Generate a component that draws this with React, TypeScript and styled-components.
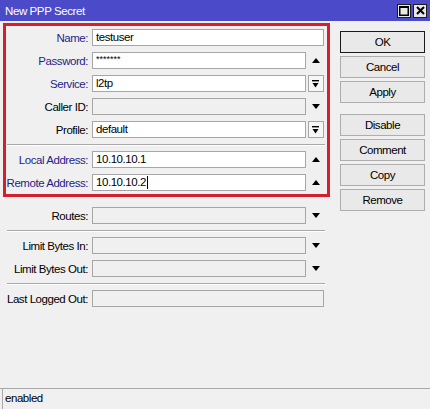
import React from "react";
import styled, { createGlobalStyle } from "styled-components";

const Global = createGlobalStyle`
  html, body { margin: 0; padding: 0; background: #f0f0f0; }
  body {
    font-family: "Liberation Sans", Arial, sans-serif;
    font-size: 11px;
    letter-spacing: -0.45px;
    color: #000;
  }
`;

const Window = styled.div`
  width: 430px;
  height: 409px;
  background: #f0f0f0;
  display: flex;
  flex-direction: column;
  overflow: hidden;
`;

const TitleBar = styled.div`
  height: 21px;
  flex: none;
  background: #4b4bc9;
  color: #fff;
  display: flex;
  align-items: center;
  padding: 0 3px 0 5px;
  font-size: 11.5px;
  letter-spacing: -0.4px;
`;

const TitleButtons = styled.div`
  margin-left: auto;
  display: flex;
  gap: 2px;
`;

const TitleButton = styled.div`
  width: 14px;
  height: 14px;
  box-sizing: border-box;
  border: 1px solid #1c1c1c;
  background: #e8e8e8;
  display: flex;
  align-items: center;
  justify-content: center;
`;

const Body = styled.div`
  flex: 1;
  display: flex;
  gap: 10px;
  padding: 2px 0 0 3px;
`;

const LeftCol = styled.div`
  width: 327px;
  display: flex;
  flex-direction: column;
`;

const RedBox = styled.div`
  width: 327px;
  box-sizing: border-box;
  border: 3px solid #d3202c;
  padding: 3px 3px 3px 0;
  display: flex;
  flex-direction: column;
  gap: 6px;
`;

const Stack = styled.div`
  margin-top: 10px;
  display: flex;
  flex-direction: column;
  gap: 6px;
`;

const Separator = styled.div<{ $inset: number }>`
  height: 1px;
  background: #a9a9a9;
  box-shadow: 0 1px 0 #ffffff;
  margin-left: ${(p) => p.$inset}px;
  width: 318px;
`;

const Row = styled.div`
  display: flex;
  align-items: center;
  height: 17px;
`;

const Label = styled.div<{ $w: number; $blue?: boolean }>`
  width: ${(p) => p.$w}px;
  flex: none;
  box-sizing: border-box;
  padding-right: 4px;
  text-align: right;
  white-space: nowrap;
  font-size: 11.5px;
  color: ${(p) => (p.$blue ? "#1e1e8c" : "#000")};
`;

const Field = styled.div<{ $full?: boolean; $disabled?: boolean }>`
  width: ${(p) => (p.$full ? 232 : 214)}px;
  height: 17px;
  flex: none;
  box-sizing: border-box;
  border: 1px solid #a6a6a6;
  background: ${(p) => (p.$disabled ? "#f0f0f0" : "#ffffff")};
  padding: 0 3px;
  line-height: 15px;
  font-size: 11.5px;
  white-space: nowrap;
  overflow: hidden;
  display: flex;
  align-items: center;
`;

const Stars = styled.span`
  font-size: 9px;
  letter-spacing: 0;
  line-height: 15px;
  position: relative;
  top: -1px;
`;

const Caret = styled.span`
  display: inline-block;
  width: 1px;
  height: 13px;
  background: #000;
  margin-left: 1px;
`;

const Trailing = styled.div`
  width: 18px;
  height: 17px;
  flex: none;
  display: flex;
  align-items: center;
  justify-content: center;
  padding-left: 2px;
  box-sizing: border-box;
`;

const DropButton = styled.div`
  width: 16px;
  height: 17px;
  margin-left: -1px;
  box-sizing: border-box;
  border: 1px solid #a6a6a6;
  background: #f7f7f7;
  display: flex;
  align-items: center;
  justify-content: center;
`;

const RightCol = styled.div`
  margin-top: 8px;
  width: 85px;
  display: flex;
  flex-direction: column;
  gap: 3px;
`;

const Button = styled.div<{ $primary?: boolean; $space?: boolean }>`
  height: 22px;
  box-sizing: border-box;
  border: 1px solid ${(p) => (p.$primary ? "#1a1a1a" : "#adadad")};
  background: #e9e9e9;
  display: flex;
  align-items: center;
  justify-content: center;
  font-size: 11.5px;
  margin-top: ${(p) => (p.$space ? 8 : 0)}px;
`;

const StatusBar = styled.div`
  height: 21px;
  flex: none;
  border-top: 1px solid #a9a9a9;
  box-sizing: border-box;
  display: flex;
  padding: 0 4px 0 2px;
`;

const StatusField = styled.div`
  flex: 1;
  border-left: 1px solid #a9a9a9;
  padding: 0 0 2px 2px;
  display: flex;
  align-items: center;
  font-size: 11.5px;
`;

const UpArrow = () => (
  <svg width="8" height="5" viewBox="0 0 8 5">
    <polygon points="0,5 8,5 4,0" fill="#000" />
  </svg>
);

const DownArrow = () => (
  <svg width="8" height="5" viewBox="0 0 8 5">
    <polygon points="0,0 8,0 4,5" fill="#000" />
  </svg>
);

const DropIcon = () => (
  <svg width="7" height="8" viewBox="0 0 7 8">
    <rect x="0" y="0" width="7" height="1.4" fill="#000" />
    <polygon points="0.5,3 6.5,3 3.5,7.5" fill="#000" />
  </svg>
);

type Trail = "up" | "down" | "drop" | "none";

function FieldRow(props: {
  label: string;
  labelW: number;
  blue?: boolean;
  value?: React.ReactNode;
  disabled?: boolean;
  trail: Trail;
}) {
  const full = props.trail === "none";
  return (
    <Row>
      <Label $w={props.labelW} $blue={props.blue}>
        {props.label}
      </Label>
      <Field $full={full} $disabled={props.disabled}>
        {props.value}
      </Field>
      {props.trail === "up" && (
        <Trailing>
          <UpArrow />
        </Trailing>
      )}
      {props.trail === "down" && (
        <Trailing>
          <DownArrow />
        </Trailing>
      )}
      {props.trail === "drop" && (
        <Trailing>
          <DropButton>
            <DropIcon />
          </DropButton>
        </Trailing>
      )}
    </Row>
  );
}

export default function App() {
  const inW = 86;
  const outW = 89;
  return (
    <>
      <Global />
      <Window>
        <TitleBar>
          New PPP Secret
          <TitleButtons>
            <TitleButton>
              <svg width="10" height="10" viewBox="0 0 10 10">
                <rect x="0.75" y="0.75" width="8.5" height="8.5" fill="none" stroke="#000" strokeWidth="1.5" />
                <rect x="0" y="0" width="10" height="2" fill="#000" />
              </svg>
            </TitleButton>
            <TitleButton>
              <svg width="9" height="9" viewBox="0 0 9 9">
                <path d="M1 1 L8 8 M8 1 L1 8" stroke="#000" strokeWidth="2" />
              </svg>
            </TitleButton>
          </TitleButtons>
        </TitleBar>
        <Body>
          <LeftCol>
            <RedBox>
              <FieldRow label="Name:" labelW={inW} blue value="testuser" trail="none" />
              <FieldRow label="Password:" labelW={inW} blue value={<Stars>*******</Stars>} trail="up" />
              <FieldRow label="Service:" labelW={inW} blue value="l2tp" trail="drop" />
              <FieldRow label="Caller ID:" labelW={inW} disabled trail="down" />
              <FieldRow label="Profile:" labelW={inW} value="default" trail="drop" />
              <Separator $inset={1} />
              <FieldRow label="Local Address:" labelW={inW} blue value="10.10.10.1" trail="up" />
              <FieldRow
                label="Remote Address:"
                labelW={inW}
                blue
                value={
                  <>
                    10.10.10.2
                    <Caret />
                  </>
                }
                trail="up"
              />
            </RedBox>
            <Stack>
              <FieldRow label="Routes:" labelW={outW} disabled trail="down" />
              <Separator $inset={4} />
              <FieldRow label="Limit Bytes In:" labelW={outW} disabled trail="down" />
              <FieldRow label="Limit Bytes Out:" labelW={outW} disabled trail="down" />
              <Separator $inset={4} />
              <FieldRow label="Last Logged Out:" labelW={outW} disabled trail="none" />
            </Stack>
          </LeftCol>
          <RightCol>
            <Button $primary>OK</Button>
            <Button>Cancel</Button>
            <Button>Apply</Button>
            <Button $space>Disable</Button>
            <Button>Comment</Button>
            <Button>Copy</Button>
            <Button>Remove</Button>
          </RightCol>
        </Body>
        <StatusBar>
          <StatusField>enabled</StatusField>
        </StatusBar>
      </Window>
    </>
  );
}
